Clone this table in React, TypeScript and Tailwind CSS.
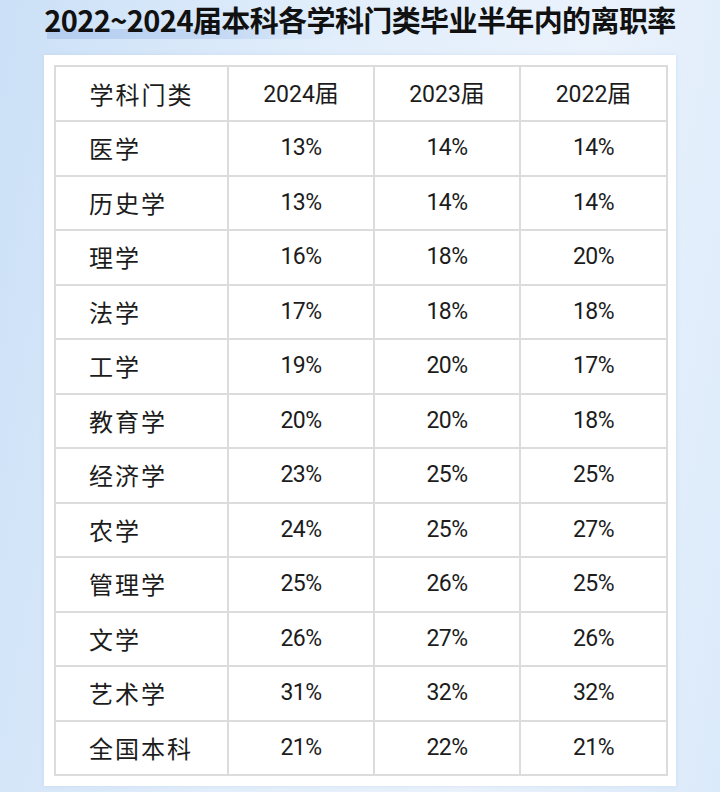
import React from "react";

const rows: [string, string, string, string][] = [
  ["医学", "13%", "14%", "14%"],
  ["历史学", "13%", "14%", "14%"],
  ["理学", "16%", "18%", "20%"],
  ["法学", "17%", "18%", "18%"],
  ["工学", "19%", "20%", "17%"],
  ["教育学", "20%", "20%", "18%"],
  ["经济学", "23%", "25%", "25%"],
  ["农学", "24%", "25%", "27%"],
  ["管理学", "25%", "26%", "25%"],
  ["文学", "26%", "27%", "26%"],
  ["艺术学", "31%", "32%", "32%"],
  ["全国本科", "21%", "22%", "21%"],
];

const cjk = { fontFamily: '"Noto Sans CJK SC", "Noto Sans", sans-serif' };
const num = { fontFamily: 'Roboto, "Noto Sans CJK SC", sans-serif' };

export default function App() {
  return (
    <div
      className="w-[720px] h-[792px] overflow-hidden flex flex-col items-center bg-[linear-gradient(100deg,#cbe0f7_0%,#e2eefb_40%,#eaf2fc_70%,#dbeafa_100%)]"
      style={cjk}
    >
      <div className="relative h-[52px] w-full flex justify-center">
        <div className="absolute left-[47px] top-[29px] h-[10px] w-[290px] bg-[linear-gradient(90deg,#b4cdef_0%,#c2d7f3_55%,rgba(222,235,250,0)_100%)]" />
        <h1 className="relative text-[29px] leading-[38px] font-bold text-[#111] tracking-[-0.6px] whitespace-nowrap">
          2022~2024届本科各学科门类毕业半年内的离职率
        </h1>
      </div>
      <div className="mt-[3px] w-[632px] bg-white p-[10px] shadow-[0_0_4px_rgba(150,180,220,0.25)]">
        <table className="w-[612px] border-collapse text-[#1c1c1c] table-fixed">
          <colgroup>
            <col className="w-[173px]" />
            <col className="w-[146px]" />
            <col className="w-[146px]" />
            <col className="w-[147px]" />
          </colgroup>
          <thead>
            <tr className="h-[55px]">
              <th className="border-2 border-[#dcdcdc] font-normal text-[24px] tracking-[2px] text-center">
                学科门类
              </th>
              {["2024", "2023", "2022"].map((y) => (
                <th key={y} className="border-2 border-[#dcdcdc] font-normal text-[24px] text-center">
                  <span style={num} className="text-[23px]">{y}</span>
                  <span>届</span>
                </th>
              ))}
            </tr>
          </thead>
          <tbody>
            {rows.map((r) => (
              <tr key={r[0]} className="h-[54.5px]">
                <td className="border-2 border-[#dcdcdc] text-[24px] tracking-[2px] pl-[33px]">
                  {r[0]}
                </td>
                {r.slice(1).map((v, i) => (
                  <td
                    key={i}
                    style={num}
                    className="border-2 border-[#dcdcdc] text-center text-[23px] tracking-[-0.5px]"
                  >
                    {v}
                  </td>
                ))}
              </tr>
            ))}
          </tbody>
        </table>
      </div>
    </div>
  );
}
